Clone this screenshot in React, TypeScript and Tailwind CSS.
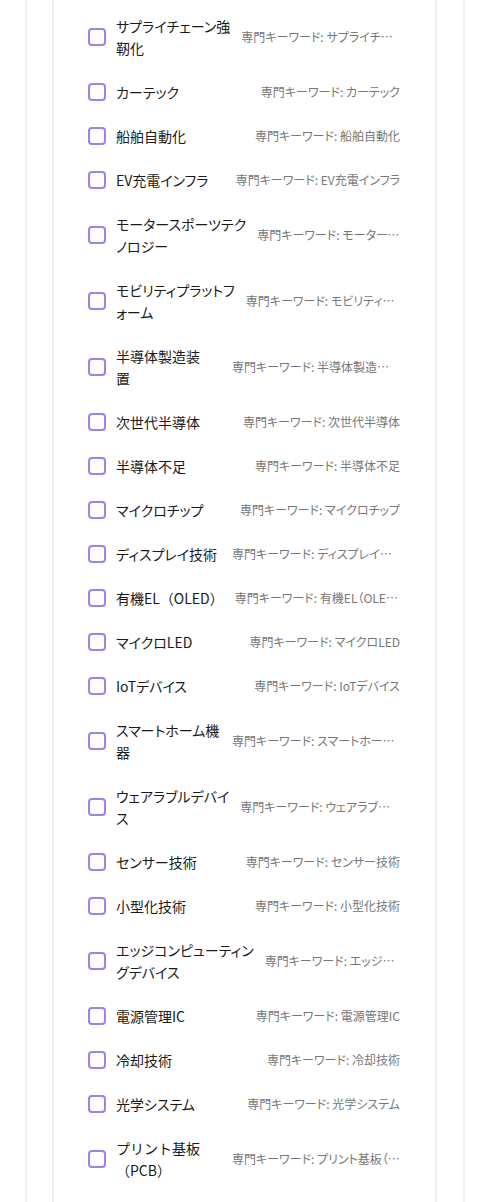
import React from "react";

const items: { lines: string[]; key: string; palt?: boolean }[] = [
  { lines: ["サプライチェーン強", "靭化"], key: "サプライチェーン強靭化" },
  { lines: ["カーテック"], key: "カーテック" },
  { lines: ["船舶自動化"], key: "船舶自動化" },
  { lines: ["EV充電インフラ"], key: "EV充電インフラ" },
  { lines: ["モータースポーツテク", "ノロジー"], key: "モータースポーツテクノロジー" },
  { lines: ["モビリティプラットフ", "ォーム"], key: "モビリティプラットフォーム" },
  { lines: ["半導体製造装", "置"], key: "半導体製造装置" },
  { lines: ["次世代半導体"], key: "次世代半導体" },
  { lines: ["半導体不足"], key: "半導体不足" },
  { lines: ["マイクロチップ"], key: "マイクロチップ" },
  { lines: ["ディスプレイ技術"], key: "ディスプレイ技術" },
  { lines: ["有機EL（OLED）"], key: "有機EL（OLED）", palt: false },
  { lines: ["マイクロLED"], key: "マイクロLED" },
  { lines: ["IoTデバイス"], key: "IoTデバイス" },
  { lines: ["スマートホーム機", "器"], key: "スマートホーム機器" },
  { lines: ["ウェアラブルデバイ", "ス"], key: "ウェアラブルデバイス" },
  { lines: ["センサー技術"], key: "センサー技術" },
  { lines: ["小型化技術"], key: "小型化技術" },
  { lines: ["エッジコンピューティン", "グデバイス"], key: "エッジコンピューティングデバイス" },
  { lines: ["電源管理IC"], key: "電源管理IC" },
  { lines: ["冷却技術"], key: "冷却技術" },
  { lines: ["光学システム"], key: "光学システム" },
  { lines: ["プリント基板", "（PCB）"], key: "プリント基板（PCB）", palt: false },
];

const font = {
  fontFamily: '"Noto Sans CJK JP", "Noto Sans", sans-serif',
};

export default function App() {
  return (
    <div className="min-h-screen bg-white" style={font}>
      <div className="ml-[25px] w-[440px] min-h-[1202px] border-x-2 border-[#efefef] px-[25px]">
        <div className="w-[385px] min-h-[1202px] border-x-2 border-[#efefef] pt-[4px]">
          {items.map((it) => (
            <div
              key={it.key}
              className="flex items-center py-[11px] pl-[34px] pr-[35px]"
            >
              <div className="w-[18px] h-[18px] shrink-0 rounded-[4px] border-2 border-[#a27ef0]" />
              <div className="ml-[10px] flex flex-1 min-w-0 items-center justify-between gap-[11px]">
                <span
                  className={
                    it.palt === false
                      ? "shrink-0 whitespace-nowrap text-[14px] leading-[22px] text-[#1a1a1a]"
                      : "shrink-0 whitespace-nowrap text-[14px] leading-[22px] text-[#1a1a1a] [font-feature-settings:'palt']"
                  }
                >
                  {it.lines.map((l, i) => (
                    <React.Fragment key={i}>
                      {i > 0 && <br />}
                      {l}
                    </React.Fragment>
                  ))}
                </span>
                <span className="min-w-0 max-w-[168px] truncate text-[12px] leading-[18px] text-[#777777] [font-feature-settings:'palt']">
                  専門キーワード: {it.key}
                </span>
              </div>
            </div>
          ))}
        </div>
      </div>
    </div>
  );
}
